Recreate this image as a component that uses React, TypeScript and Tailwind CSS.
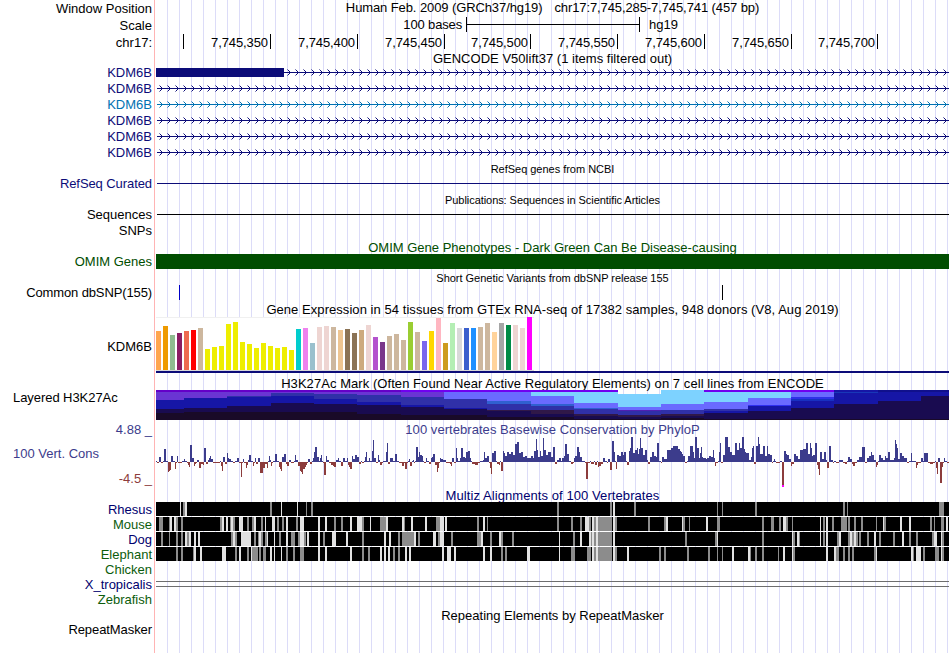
import React from 'react';

type Step = [number, number];
type Layer = [number, string];

const NAVY = '#0c0c78';
const LEFT = 156;
const WIDTH = 793;

const rulerCells = [
  { w: 28, label: '' },
  { w: 87, label: '7,745,350' },
  { w: 87, label: '7,745,400' },
  { w: 87, label: '7,745,450' },
  { w: 86, label: '7,745,500' },
  { w: 87, label: '7,745,550' },
  { w: 87, label: '7,745,600' },
  { w: 87, label: '7,745,650' },
  { w: 86, label: '7,745,700' },
];

const transcripts = [
  { color: NAVY, exonEnd: 284 },
  { color: NAVY, exonEnd: 0 },
  { color: '#0072b2', exonEnd: 0 },
  { color: NAVY, exonEnd: 0 },
  { color: NAVY, exonEnd: 0 },
  { color: NAVY, exonEnd: 0 },
];

const tissues: [number, string][] = [
  [39, '#ffa54f'], [44, '#ee9a00'], [35, '#8fbc8f'], [37, '#8b1c62'], [39, '#ee6a50'], [40, '#ff0000'], [42, '#cdb79e'],
  [21, '#eeee00'], [23, '#eeee00'], [24, '#eeee00'], [46, '#eeee00'], [48, '#eeee00'], [28, '#eeee00'], [26, '#eeee00'],
  [22, '#eeee00'], [27, '#eeee00'], [24, '#eeee00'], [22, '#eeee00'], [23, '#eeee00'], [20, '#eeee00'],
  [41, '#00cdcd'], [42, '#ee82ee'], [27, '#9ac0cd'], [43, '#eed5d2'], [44, '#eed5d2'], [43, '#cdb79e'], [40, '#eec591'],
  [41, '#8b7355'], [37, '#8b7355'], [40, '#cdaa7d'], [45, '#eed5d2'], [33, '#b452cd'], [28, '#7a378b'], [34, '#cdb79e'],
  [36, '#cdb79e'], [30, '#cdb79e'], [48, '#9acd32'], [38, '#cdb79e'], [29, '#7a67ee'], [39, '#ffd700'], [52, '#ffb6c1'],
  [27, '#cd9b1d'], [47, '#b4eeb4'], [42, '#d9d9d9'], [42, '#3a5fcd'], [42, '#1e90ff'], [43, '#cdb79e'], [47, '#cdb79e'],
  [38, '#ffd39b'], [47, '#a6a6a6'], [45, '#008b45'], [45, '#eed5d2'], [42, '#eed5d2'], [53, '#ff00ff'],
];

// H3K27Ac: start of each bin, then the layers from the top down
const P0 = '#6400c8';
const P1 = '#6a35d3';
const V = '#7000f0';
const PERI = '#6a6aff';
const SKY = '#7dd2ff';
const MED = '#3060d0';
const IND = '#3030a8';
const BLUE = '#1616a6';
const MAR = '#301848';
const DARK = '#190b50';
const INK = '#190a28';

const acetylation: { x: number; layers: Layer[] }[] = [
  { x: 156, layers: [[0, P0], [2, P1], [10, BLUE], [19, DARK], [23, INK]] },
  { x: 184, layers: [[0, P0], [2, P1], [8, BLUE], [18, DARK], [22, INK]] },
  { x: 227, layers: [[0, P0], [2, P1], [6, IND], [7, BLUE], [16, DARK], [22, INK]] },
  { x: 271, layers: [[0, P0], [2, P1], [3, IND], [6, BLUE], [13, DARK], [22, INK]] },
  { x: 314, layers: [[0, P0], [2, P1], [4, IND], [9, BLUE], [14, DARK], [22, INK]] },
  { x: 357, layers: [[0, P0], [2, P1], [5, IND], [12, BLUE], [15, DARK], [24, INK]] },
  { x: 401, layers: [[0, V], [2, P1], [7, IND], [15, BLUE], [17, DARK], [25, INK]] },
  { x: 444, layers: [[0, V], [2, PERI], [9, IND], [18, BLUE], [19, DARK], [25, INK]] },
  { x: 487, layers: [[0, V], [2, PERI], [11, MED], [14, IND], [20, MAR], [21, DARK], [27, INK]] },
  { x: 531, layers: [[0, V], [2, SKY], [6, PERI], [14, MED], [16, IND], [20, MAR], [24, DARK], [27, INK]] },
  { x: 574, layers: [[0, V], [2, SKY], [13, PERI], [18, MED], [19, IND], [24, MAR], [26, DARK], [29, INK]] },
  { x: 618, layers: [[4, SKY], [17, PERI], [20, '#5020b0'], [21, IND], [25, MAR], [27, DARK], [29, INK]] },
  { x: 661, layers: [[0, SKY], [14, PERI], [20, IND], [24, MAR], [26, DARK], [28, INK]] },
  { x: 704, layers: [[0, V], [2, SKY], [12, PERI], [19, IND], [21, BLUE], [23, DARK], [29, INK]] },
  { x: 748, layers: [[0, V], [2, SKY], [8, PERI], [15, '#3030f0'], [16, BLUE], [21, DARK], [29, INK]] },
  { x: 791, layers: [[0, V], [2, PERI], [7, '#3030e8'], [9, '#1830c0'], [11, BLUE], [18, DARK], [29, INK]] },
  { x: 834, layers: [[0, BLUE], [2, '#1838b8'], [3, BLUE], [14, DARK], [29, INK]] },
  { x: 878, layers: [[0, '#10108c'], [2, BLUE], [11, DARK], [29, INK]] },
  { x: 921, layers: [[0, '#10108c'], [2, BLUE], [6, DARK], [29, INK]] },
];

// PhyloP scores in pixels, each holding until the next x
const conservation: Step[] = [
  [156, 1], [157, -1], [159, 5], [161, -1], [163, 1], [164, 13], [166, 1], [168, -10], [169, -9], [170, -8], [171, 6], [173, 1],
  [175, -7], [176, -1], [177, 6], [178, -1], [182, 1], [184, 3], [185, 1], [187, -1], [188, -3], [189, -5], [190, 17], [192, 4],
  [194, -4], [195, -2], [196, -1], [197, 2], [199, -6], [201, -2], [203, -3], [204, 14], [206, -2], [208, 2], [209, 4], [210, 6],
  [211, 3], [213, -1], [220, 1], [221, -4], [222, -9], [223, 5], [225, -2], [227, 9], [228, 4], [229, 3], [231, 1], [233, -1],
  [235, 1], [237, 4], [239, -1], [241, -15], [242, -1], [243, 3], [244, -1], [246, -6], [247, -3], [248, 2], [249, 7], [251, 1],
  [253, -4], [254, -1], [255, 4], [256, -2], [258, 4], [260, -11], [263, -6], [265, -2], [267, -6], [268, 1], [269, 6], [270, 2],
  [271, -4], [272, -1], [273, 1], [275, 8], [277, 1], [279, -5], [280, -7], [281, -9], [282, 5], [284, 8], [286, -2], [287, -4],
  [289, 2], [291, -1], [294, 1], [295, 7], [296, 2], [298, -4], [300, -9], [301, -10], [302, -12], [303, -7], [305, -5], [306, -3],
  [307, -1], [308, 3], [310, -2], [312, 1], [313, 4], [314, 10], [315, 15], [317, 5], [319, 1], [320, 4], [321, 7], [322, 1],
  [323, -1], [324, -13], [326, 6], [327, 2], [329, -1], [331, -3], [333, -4], [334, -5], [336, 2], [338, 4], [339, 1], [341, -4],
  [343, 4], [345, 1], [347, 4], [348, -3], [349, -5], [350, -7], [352, 6], [353, 3], [355, 7], [357, 5], [359, -2], [361, 1],
  [362, -1], [364, 1], [365, 5], [366, 10], [367, 1], [369, 4], [370, 1], [372, 11], [373, 22], [374, 4], [376, -1], [378, 7],
  [379, 2], [380, -3], [382, -1], [383, 1], [386, 10], [387, 19], [388, -2], [390, 4], [393, 1], [395, 8], [397, 1], [399, -1],
  [402, -4], [404, -1], [405, -7], [407, -1], [408, 1], [409, 3], [410, -4], [412, 1], [413, 2], [414, -1], [415, 1], [416, 15],
  [418, 5], [419, 10], [420, 7], [422, 6], [423, 1], [424, -1], [426, 4], [427, 1], [429, -2], [431, 4], [432, 5], [433, 8],
  [435, -3], [437, -10], [438, -6], [439, -1], [440, 4], [441, 3], [443, 2], [446, -1], [450, -2], [451, -4], [452, 4], [454, -1],
  [456, 14], [457, 4], [458, 1], [460, 4], [461, 14], [463, 5], [465, 4], [466, 10], [468, 11], [470, 4], [471, 1], [472, -2],
  [475, -3], [478, -1], [480, 1], [483, 2], [484, 10], [485, 4], [487, 6], [489, -1], [490, -6], [491, -12], [492, 9], [494, 11],
  [496, 1], [497, -2], [499, -3], [500, 1], [501, -9], [503, 11], [504, 9], [505, 6], [507, 10], [509, 8], [511, 10], [513, 7],
  [515, 18], [517, 20], [519, 9], [521, 10], [523, 5], [525, 6], [527, 4], [531, 6], [533, 4], [534, 11], [536, 23], [537, 12],
  [538, 5], [540, 11], [541, 6], [543, 24], [544, 12], [546, 7], [548, 10], [551, 5], [553, 15], [555, -2], [557, 2], [559, 4],
  [561, 1], [562, 4], [564, 6], [565, 18], [567, 8], [569, 1], [571, -2], [573, -1], [574, 4], [575, 6], [577, 15], [579, 10],
  [580, 5], [582, 1], [585, -1], [586, -17], [588, -1], [590, 1], [591, -2], [594, 1], [595, -3], [597, 1], [598, -5], [599, -4],
  [601, -2], [603, 4], [605, 1], [607, -1], [608, 3], [610, -8], [612, 21], [614, 10], [615, 1], [616, -7], [617, 7], [619, 6],
  [621, 10], [623, 7], [624, 10], [626, 1], [627, -3], [629, 11], [630, 14], [631, 25], [633, 9], [635, 12], [637, 14], [638, 8],
  [639, 13], [640, 24], [641, 14], [643, 7], [645, 12], [647, 2], [648, -2], [650, 5], [652, 10], [654, 6], [656, 5], [657, 19],
  [659, 1], [661, -1], [662, 5], [664, 3], [667, 12], [671, 14], [673, 16], [678, 13], [680, 11], [681, 10], [682, 8], [683, 6],
  [685, -1], [687, 1], [688, 6], [690, 16], [693, 10], [694, 4], [695, 25], [697, 14], [699, 4], [700, 9], [701, 15], [702, 5],
  [703, 4], [706, 3], [707, 4], [709, 6], [711, 5], [713, 12], [714, 4], [715, -4], [716, -1], [718, 1], [719, 10], [720, 19],
  [721, -1], [723, 7], [725, 25], [728, 15], [730, 10], [732, 7], [735, 19], [737, 12], [739, 19], [740, 14], [742, 25], [744, 13],
  [745, 10], [746, 9], [749, 2], [751, 5], [752, 14], [753, 16], [754, -2], [756, 16], [758, 25], [759, 18], [760, 8], [763, 16],
  [765, 6], [767, 16], [768, 8], [770, 7], [772, -1], [773, 1], [774, 3], [775, 1], [776, -1], [780, 1], [782, -25], [784, 11],
  [786, 8], [787, 7], [789, 3], [791, -4], [792, -2], [794, 8], [796, 6], [798, 3], [800, 12], [803, 13], [806, 19], [808, 8],
  [810, 19], [811, 14], [812, 6], [813, 7], [815, 19], [817, -3], [818, -7], [819, -13], [820, 10], [822, 3], [824, 10], [826, 2],
  [827, -6], [829, 16], [831, 2], [833, -1], [834, 1], [836, -1], [839, 2], [843, -1], [845, -2], [847, 1], [848, 5], [850, 3],
  [852, -2], [853, -4], [855, -1], [857, 2], [859, 5], [862, 15], [865, -1], [867, 4], [869, 6], [871, 10], [872, 7], [874, 2],
  [876, -5], [877, -3], [878, 1], [879, 7], [881, 4], [883, 2], [885, 6], [886, 4], [888, 10], [890, 2], [894, 4], [895, 22],
  [896, 18], [897, 14], [898, 3], [900, 9], [902, 6], [904, 4], [907, -1], [909, 1], [911, 9], [912, 1], [916, -6], [917, -3],
  [918, -1], [921, 4], [923, 1], [924, 9], [928, -1], [930, -2], [933, -1], [935, 1], [936, -6], [937, -12], [938, 4], [940, -21],
  [942, -5], [943, -1], [944, 4], [945, 1], [947, -1], [949, 0],
];

// Alignment gaps: "g" grey, "l" light, then x and an optional width (2 by default)
const multiz = [
  {
    name: 'Rhesus',
    color: NAVY,
    marks: 'l180:1 g183 l185 g270 l281:1 l297:1 g306:1 g311 g557 g610 l613 g634 g717:1 g722:1 g755 g843 g847:1 g939:5',
  },
  {
    name: 'Mouse',
    color: '#0c5c0c',
    marks:
      'g159:4 g169:1 l170 l174 g176 g181 g220 l222 l226 g230:1 l231 g233 l239:4 g247 g252 l254 g261 l265:1 l272:3 g277 g282 l286 g296 l300:4 l318 l325 g334 g341 l350 l357:5 g362 l370:1 g380:6 l386 l402 g404:1 l411 l425 g436:4 l440:4 l445 g477 l483 g487:1 g557 g571 g580 l585:4 g589 l592 g594 l596 g598:14 l613 g615 g648 g664 l666 l682:1 g683 g689:1 l706 g717:3 g762 g771:3 g779 l783:3 g786 g792:1 l820:1 g823 l826 g832 g841:6 g848 g854 g861 g876:1 l883:1 g884 l900 l909 g930 g934:1 g941:3 l946',
  },
  {
    name: 'Dog',
    color: NAVY,
    marks:
      'g161 g169:1 g176 g181 l185 g187 l189 l194 l198 g231 l233 g235 l241:10 g254 g258:1 l259 g261 g265 l267:1 l274:1 g279 l286 g291:4 g298 l300:4 g304 l307 l318 g323 l332:4 l346 g362 l384 l389 g398 g402:12 l414 g418 l433:3 g438 l440:4 g451 g477:4 l481 g490 l499 g501 g512 l559:1 g573 l580 l589 g591:1 l592 g594 l596 g598:14 l613 g685 g715 l717:1 g762 l792:1 g793 l797 g799:1 l820:1 g823 l826 g837 l839 g848 l850 g852 l854 g856 g859 g867 l874 g879 g893 l902 g909 g916 g932 l934:3 l941:1 g942',
  },
  {
    name: 'Elephant',
    color: '#0c5c0c',
    marks:
      'g176 g181 g193:1 l194 l200 l222:4 g235 l239 g247 l251:1 g252:6 g259 g263:3 l270 l274:1 l281:1 g286 g293 g300:4 l318 l325 l350 g362 g368 l380 l384 l388 g393 g398 l405 l409 l442 l447:4 l454 l483 l490 g501 g505 l527:3 l559:1 g571:4 g587:4 l592 g594 l596 g598:14 l613 g615 l627 g659 g664 g687 g708 g717:1 g722:1 l732 l748 g750:1 g755 g762 g778:1 l783 l792:1 g793 l826 l834 g836:3 g843 g848 g852 g874 l876:1 l911 g913:1 l916:5 g923 g935:4 l941:1 g942',
  },
];

interface RowProps {
  className: string;
  label?: React.ReactNode;
  labelClass?: string;
  children?: React.ReactNode;
}

const Row: React.FC<RowProps> = ({ className, label, labelClass = '', children }) => (
  <div className={`flex w-[949px] ${className}`}>
    <div className={`flex w-[156px] shrink-0 items-center justify-end whitespace-nowrap pr-[4px] ${labelClass}`}>
      {label}
    </div>
    <div className="flex w-[793px] shrink-0">{children}</div>
  </div>
);

const Title: React.FC<{ className?: string; children: React.ReactNode }> = ({ className = '', children }) => (
  <div className={`flex w-full items-center justify-center whitespace-pre ${className}`}>{children}</div>
);

const Plot: React.FC<{ height: number; children: React.ReactNode }> = ({ height, children }) => (
  <svg width={WIDTH} height={height} viewBox={`${LEFT} 0 ${WIDTH} ${height}`} shapeRendering="crispEdges" className="block">
    {children}
  </svg>
);

const Intron: React.FC<{ color: string; exonEnd: number }> = ({ color, exonEnd }) => {
  const start = exonEnd || 157;
  const tips: number[] = [];
  for (let x = 162; x < 949; x += 8) {
    if (x - 3 >= start) tips.push(x);
  }
  return (
    <Plot height={16}>
      <rect x={start} y={8} width={949 - start} height={1} fill={color} />
      {tips.map((x) => (
        <g key={x} fill={color}>
          <path d={`M${x - 1} 7h1v1h-1zM${x - 2} 6h1v1h-1zM${x - 1} 9h1v1h-1zM${x - 2} 10h1v1h-1z`} />
          <path opacity={0.5} d={`M${x - 3} 5h1v1h-1zM${x - 3} 11h1v1h-1z`} />
        </g>
      ))}
      {exonEnd > 0 && <rect x={LEFT} y={4} width={exonEnd - LEFT} height={9} fill={color} />}
    </Plot>
  );
};

const Alignment: React.FC<{ marks: string }> = ({ marks }) => (
  <Plot height={14}>
    <rect x={LEFT} y={0} width={WIDTH} height={14} fill="#000" />
    {marks.split(' ').map((mark) => {
      const [x, w] = mark.slice(1).split(':');
      return (
        <rect key={mark} x={x} y={0} width={w || 2} height={14} fill={mark[0] === 'g' ? '#8c8c8c' : '#e2e2e2'} />
      );
    })}
  </Plot>
);

const App: React.FC = () => {
  return (
    <div className="h-[653px] w-[950px] overflow-hidden bg-white font-['Liberation_Sans',Arial,sans-serif] text-[13px] leading-[15px] text-black">
      <div className="h-full w-full bg-[linear-gradient(to_right,transparent_154px,#ffb4b4_154px,#ffb4b4_155px,#fff_155px,#fff_156px,transparent_156px),repeating-linear-gradient(to_right,#fff_0px,#fff_11px,#dcdcf8_11px,#dcdcf8_12px)] bg-[position:0_0,156px_0] bg-no-repeat">
        <Row className="h-[17px]" label="Window Position">
          <Title className="gap-[12px] pb-[2px] tracking-[-0.1px]">
            <span>Human Feb. 2009 (GRCh37/hg19)</span>
            <span>chr17:7,745,285-7,745,741 (457 bp)</span>
          </Title>
        </Row>
        <Row className="h-[17px]" label="Scale">
          <div className="w-[310px] pr-[4px] text-right tracking-[-0.15px]">100 bases</div>
          <div className="h-[15px] w-[174px] border-x border-black pt-[7px]">
            <div className="h-px bg-black" />
          </div>
          <div className="pl-[9px]">hg19</div>
        </Row>
        <Row className="h-[17px]" label="chr17:">
          {rulerCells.map((cell, idx) => (
            <div
              key={idx}
              className="h-[15px] shrink-0 border-r border-black pr-[2px] pt-px text-right tracking-[-0.1px]"
              style={{ width: cell.w }}
            >
              {cell.label}
            </div>
          ))}
        </Row>

        <Row className="h-[13px]">
          <Title className="pt-px tracking-[0.02px]">GENCODE V50lift37 (1 items filtered out)</Title>
        </Row>
        {transcripts.map((item, idx) => (
          <Row
            key={idx}
            className="h-[16px]"
            label="KDM6B"
            labelClass={item.color === NAVY ? 'text-[#0c0c78]' : 'text-[#0072b2]'}
          >
            <Intron color={item.color} exonEnd={item.exonEnd} />
          </Row>
        ))}

        <Row className="h-[16px]">
          <Title className="pt-[3px] text-[11px] tracking-[-0.02px]">RefSeq genes from NCBI</Title>
        </Row>
        <Row className="h-[15px]" label="RefSeq Curated" labelClass="text-[#0c0c78] tracking-[-0.08px]">
          <div className="ml-px mt-[7px] h-px w-full bg-[#0c0c78]" />
        </Row>
        <Row className="h-[16px]">
          <Title className="pt-[2px] text-[11px] tracking-[-0.06px]">Publications: Sequences in Scientific Articles</Title>
        </Row>
        <Row className="h-[15px]" label="Sequences">
          <div className="ml-px mt-[7px] h-px w-full bg-black" />
        </Row>
        <Row className="h-[17px]" label="SNPs" />

        <Row className="h-[15px]">
          <Title className="pt-px text-[#004d00]">OMIM Gene Phenotypes - Dark Green Can Be Disease-causing</Title>
        </Row>
        <Row className="h-[15px]" label="OMIM Genes" labelClass="text-[#004d00]">
          <div className="h-[15px] w-full bg-[#004d00]" />
        </Row>
        <Row className="h-[16px]">
          <Title className="pt-[3px] text-[11px] tracking-[-0.02px]">Short Genetic Variants from dbSNP release 155</Title>
        </Row>
        <Row className="h-[16px]" label="Common dbSNP(155)" labelClass="pb-px tracking-[-0.12px]">
          <Plot height={15}>
            <rect x={179} y={0} width={1} height={15} fill="#0000c8" />
            <rect x={722} y={0} width={1} height={15} fill="#000" />
          </Plot>
        </Row>

        <Row className="h-[16px]">
          <Title className="tracking-[0.055px]">
            Gene Expression in 54 tissues from GTEx RNA-seq of 17382 samples, 948 donors (V8, Aug 2019)
          </Title>
        </Row>
        <Row className="h-[58px]" label="KDM6B">
          <Plot height={58}>
            <rect x={156} y={0} width={378} height={54} fill="#fff" />
            <rect x={156} y={0} width={378} height={1} fill="#f0f0f0" />
            <rect x={156} y={53} width={378} height={1} fill="#d8d8d8" />
            {tissues.map(([h, color], idx) => (
              <rect key={idx} x={156 + idx * 7} y={53 - h} width={5} height={h} fill={color} />
            ))}
            <rect x={156} y={54} width={793} height={2} fill={NAVY} />
          </Plot>
        </Row>

        <Row className="h-[15px]">
          <Title className="pt-px tracking-[0.06px]">
            H3K27Ac Mark (Often Found Near Active Regulatory Elements) on 7 cell lines from ENCODE
          </Title>
        </Row>
        <Row className="h-[32px]" label="Layered H3K27Ac" labelClass="!justify-start pl-[13px] !items-start tracking-[-0.06px]">
          <Plot height={30}>
            {acetylation.map(({ x, layers }, idx) => {
              const end = idx + 1 < acetylation.length ? acetylation[idx + 1].x : 949;
              return layers.map(([top, color]) => (
                <rect key={`${x}-${top}`} x={x} y={top} width={end - x} height={30 - top} fill={color} />
              ));
            })}
          </Plot>
        </Row>

        <Row className="h-[15px]" label="4.88 _" labelClass="text-[#3c3c8c]">
          <Title className="tracking-[0.05px] text-[#3c3c8c]">100 vertebrates Basewise Conservation by PhyloP</Title>
        </Row>
        <Row
          className="h-[51px]"
          labelClass="!items-stretch !pr-0"
          label={
            <div className="flex w-full flex-col justify-between pb-[2px] pl-[13px] pr-[4px] pt-[9px]">
              <div className="text-[#3c3c8c]">100 Vert. Cons</div>
              <div className="text-right text-[#8c3c3c]">-4.5 _</div>
            </div>
          }
        >
          <Plot height={51}>
            {conservation.slice(0, -1).map(([x, v], idx) => (
              <rect
                key={x}
                x={x}
                y={v > 0 ? 25 - v : 25}
                width={conservation[idx + 1][0] - x}
                height={Math.abs(v)}
                fill={v > 0 ? '#3c3c8c' : '#8c3c3c'}
              />
            ))}
            <rect x={782} y={48} width={2} height={2} fill="#ff00ff" />
          </Plot>
        </Row>

        <Row className="h-[14px]">
          <Title className="pt-px tracking-[0.08px] text-[#00006e]">Multiz Alignments of 100 Vertebrates</Title>
        </Row>
        {multiz.map((species) => (
          <Row
            key={species.name}
            className="h-[15px]"
            label={species.name}
            labelClass={species.color === NAVY ? 'text-[#00006e]' : 'text-[#0c5c0c]'}
          >
            <Alignment marks={species.marks} />
          </Row>
        ))}
        <Row className="h-[15px]" label="Chicken" labelClass="text-[#0c5c0c]" />
        <Row className="h-[15px]" label="X_tropicalis" labelClass="text-[#00006e]">
          <div className="mt-[4px] h-[6px] w-full border-y border-[#6e6e6e]" />
        </Row>
        <Row className="h-[15px]" label="Zebrafish" labelClass="text-[#0c5c0c]" />

        <Row className="h-[15px]">
          <Title className="pt-[2px]">Repeating Elements by RepeatMasker</Title>
        </Row>
        <Row className="h-[15px]" label="RepeatMasker" labelClass="tracking-[-0.08px]" />
      </div>
    </div>
  );
};

export default App;
